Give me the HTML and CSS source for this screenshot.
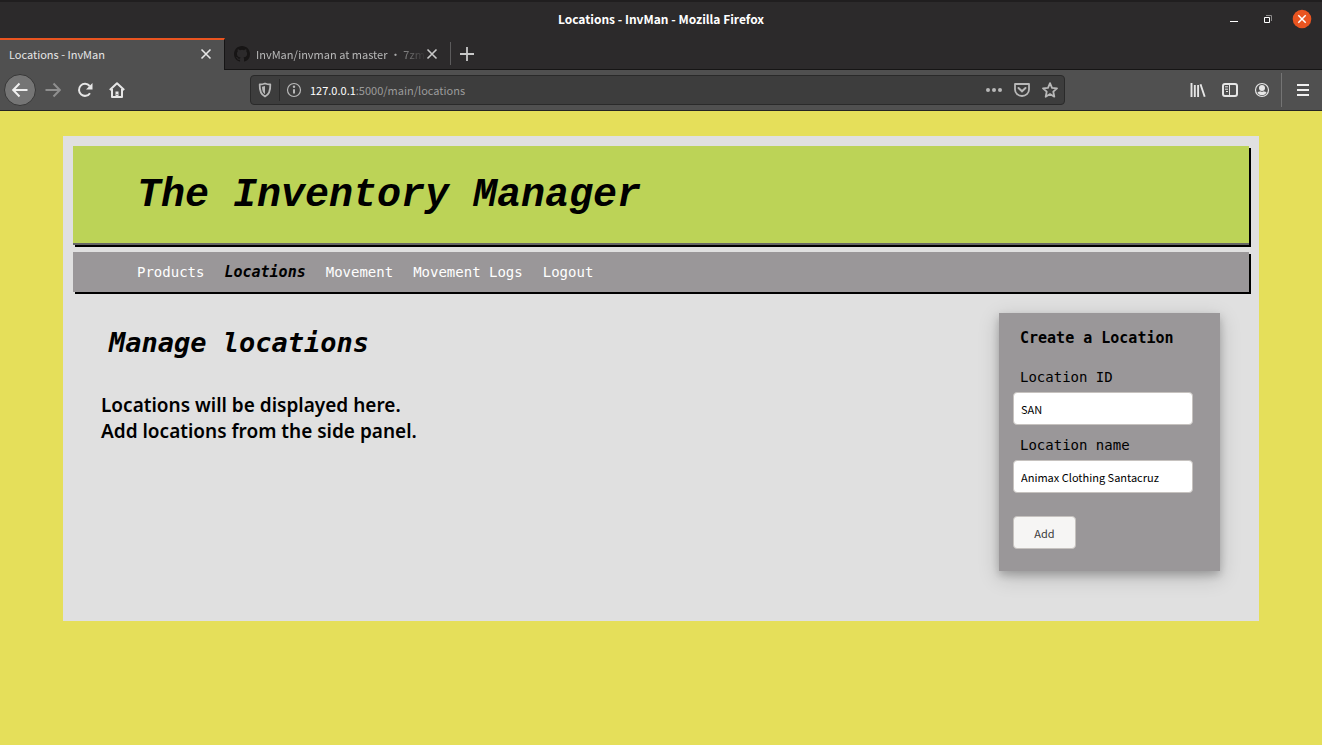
FILE: index.html
```html
<!DOCTYPE html>
<html lang="en">
<head>
<meta charset="utf-8">
<title>Locations - InvMan</title>
<link rel="stylesheet" href="styles.css">
</head>
<body>
<div class="browser">
  <div class="titlebar">
    <span class="window-title">Locations - InvMan - Mozilla Firefox</span>
    <div class="window-controls">
      <button aria-label="Minimize"><svg width="12" height="20" viewBox="0 0 12 20"><path d="M2 12.5h8" stroke="#fff"/></svg></button>
      <button aria-label="Restore"><svg width="12" height="20" viewBox="0 0 12 20"><path d="M4 6.500h5.500v5.500" fill="none" stroke="#8c8a8a"/><path d="M2.500 8.500h5v5h-5z" fill="none" stroke="#fff"/></svg></button>
      <button aria-label="Close window"><svg width="20" height="20" viewBox="0 0 20 20"><circle cx="10" cy="10" r="9.300" fill="#e95420"/><path d="M6.300 6.300l7.400 7.400M13.700 6.300l-7.400 7.400" stroke="#fff" stroke-width="1.500"/></svg></button>
    </div>
  </div>
  <div class="tabs">
    <div class="tab tab-active"><span class="tab-label">Locations - InvMan</span>
      <button aria-label="Close tab"><svg width="12" height="12" viewBox="0 0 12 12"><path d="M1.500 1.500l9 9M10.500 1.500l-9 9" stroke="#e6e6e6" stroke-width="1.600"/></svg></button></div>
    <div class="tab">
      <svg class="github" width="16" height="16" viewBox="0 0 16 16"><path fill="#171515" d="M8 0C3.580 0 0 3.580 0 8c0 3.540 2.290 6.530 5.470 7.590.4.070.55-.17.55-.38v-1.490c-2.010.37-2.530-.49-2.690-.94-.09-.23-.48-.94-.82-1.130-.28-.15-.68-.52-.01-.53.63-.01 1.080.58 1.230.82.72 1.210 1.870.87 2.330.66.07-.52.28-.87.51-1.070-1.780-.2-3.640-.89-3.640-3.950 0-.87.31-1.590.82-2.150-.08-.2-.36-1.020.08-2.120 0 0 .67-.21 2.200.82a7.600 7.600 0 0 1 4 0c1.530-1.040 2.200-.82 2.200-.82.44 1.100.16 1.920.08 2.120.51.560.82 1.270.82 2.150 0 3.070-1.870 3.750-3.650 3.950.29.250.54.730.54 1.480v2.200c0 .21.150.46.550.38A8 8 0 0 0 16 8c0-4.420-3.580-8-8-8z"/></svg>
      <span class="tab-label tab-fade">InvMan/invman at master · 7zm</span>
      <button aria-label="Close tab"><svg width="12" height="12" viewBox="0 0 12 12"><path d="M1.500 1.500l9 9M10.500 1.500l-9 9" stroke="#c8c8c8" stroke-width="1.600"/></svg></button></div>
    <button class="new-tab" aria-label="New tab"><svg width="16" height="16" viewBox="0 0 16 16"><path d="M8 1v14M1 8h14" stroke="#c8c8c8" stroke-width="1.800"/></svg></button>
  </div>
  <div class="toolbar">
    <div class="nav-buttons">
      <button class="back" aria-label="Back"><svg width="16" height="16" viewBox="0 0 16 16"><path d="M15.500 8H1.500M7.500 1.500L1.200 8l6.300 6.500" fill="none" stroke="#f0f0f0" stroke-width="2"/></svg></button>
      <button aria-label="Forward"><svg width="16" height="16" viewBox="0 0 16 16"><path d="M.5 8h14M8.500 1.500L14.800 8l-6.300 6.500" fill="none" stroke="#8f8f8f" stroke-width="2"/></svg></button>
      <button aria-label="Reload"><svg width="16" height="16" viewBox="0 0 16 16"><path d="M13 11.200A6 6 0 1 1 12.600 4" fill="none" stroke="#e6e6e6" stroke-width="2"/><path d="M15.500 1v6.500H9z" fill="#e6e6e6"/></svg></button>
      <button aria-label="Home"><svg width="16" height="16" viewBox="0 0 16 16"><path d="M.8 8L8 1.300 15.200 8M3 7v8h10V7" fill="none" stroke="#e6e6e6" stroke-width="2" stroke-linejoin="round"/><path d="M6.500 15V9.500h3V15z" fill="#e6e6e6"/><path d="M7.500 12h1v1h-1z" fill="#505050"/></svg></button>
    </div>
    <div class="address">
      <svg width="16" height="16" viewBox="0 0 16 16"><path d="M8 1.500c2 .8 3.700 1 5.300 1 .2 6-1 10-5.300 12C3.700 12.500 2.500 8.500 2.700 2.500c1.600 0 3.300-.2 5.300-1z" fill="none" stroke="#b8b8b8" stroke-width="1.800" stroke-linejoin="round"/><path d="M8 4v8.200c-2-1.400-3-3.600-3-7.500z" fill="#b8b8b8"/></svg>
      <span class="address-split"></span>
      <svg width="16" height="16" viewBox="0 0 16 16"><circle cx="8" cy="8" r="6.500" fill="none" stroke="#b8b8b8" stroke-width="1.200"/><path d="M8 7.200v4.300" stroke="#b8b8b8" stroke-width="2"/><circle cx="8" cy="4.700" r="1.200" fill="#b8b8b8"/></svg>
      <span class="url"><b>127.0.0.1</b>:5000/main/locations</span>
      <div class="address-icons">
        <svg width="16" height="16" viewBox="0 0 16 16"><g fill="#b8b8b8"><circle cx="2" cy="8" r="2"/><circle cx="8" cy="8" r="2"/><circle cx="14" cy="8" r="2"/></g></svg>
        <svg width="16" height="16" viewBox="0 0 16 16"><path d="M1 2h14v5.500a7 6.500 0 0 1-14 0z" fill="none" stroke="#b8b8b8" stroke-width="1.800" stroke-linejoin="round"/><path d="M4.500 6L8 9.300 11.500 6" fill="none" stroke="#b8b8b8" stroke-width="2" stroke-linecap="round"/></svg>
        <svg width="16" height="16" viewBox="0 0 16 16"><path d="M8 1.200l2 4.600 5 .5-3.700 3.400 1 5L8 12.100l-4.300 2.600 1-5L1 6.300l5-.5z" fill="none" stroke="#b8b8b8" stroke-width="1.800" stroke-linejoin="round"/></svg>
      </div>
    </div>
    <div class="tool-icons">
      <button aria-label="Library"><svg width="16" height="16" viewBox="0 0 16 16"><path d="M1.500 1v14M4.800 3v12M8.100 3v12M10.500 2.300l4.200 12.400" stroke="#e6e6e6" stroke-width="1.900"/></svg></button>
      <button aria-label="Sidebars"><svg width="16" height="16" viewBox="0 0 16 16"><rect x="1" y="2" width="14" height="12" rx="2" fill="none" stroke="#e6e6e6" stroke-width="2"/><path d="M7.500 2v12" stroke="#e6e6e6"/><path d="M3 4.800h3M3 7.200h3M4 9.500h2" stroke="#e6e6e6"/></svg></button>
      <button aria-label="Account"><svg width="16" height="16" viewBox="0 0 16 16"><circle cx="8" cy="8" r="6.500" fill="none" stroke="#e6e6e6" stroke-width="1.200"/><circle cx="8" cy="6" r="3" fill="#e6e6e6"/><path d="M3.500 10c1 0 2-.3 2.700-.8q1.800 1 3.600 0c.7.500 1.700.8 2.700.8-1 4.400-8 4.400-9 0z" fill="#e6e6e6"/></svg></button>
    </div>
    <button class="menu" aria-label="Menu"><svg width="16" height="16" viewBox="0 0 16 16"><path d="M2 3h12M2 8h12M2 13h12" stroke="#f0f0f0" stroke-width="2"/></svg></button>
  </div>
</div>
<div class="page">
  <header class="banner"><h1>The Inventory Manager</h1></header>
  <nav class="site-nav">
    <a href="#">Products</a>
    <a href="#" class="current" aria-current="page">Locations</a>
    <a href="#">Movement</a>
    <a href="#">Movement Logs</a>
    <a href="#">Logout</a>
  </nav>
  <main class="content">
    <section>
      <h2>Manage locations</h2>
      <p class="empty">Locations will be displayed here.<br>Add locations from the side panel.</p>
    </section>
    <form class="card">
      <h3>Create a Location</h3>
      <label for="loc-id">Location ID</label>
      <input id="loc-id" type="text" value="SAN">
      <label for="loc-name">Location name</label>
      <input id="loc-name" type="text" value="Animax Clothing Santacruz">
      <button type="button">Add</button>
    </form>
  </main>
</div>
</body>
</html>
```

FILE: styles.css
```css
* { box-sizing: border-box; }
body {
  margin: 0;
  background: #e5df5a;
  font-family: "Noto Sans CJK SC", "Noto Sans", sans-serif;
  font-size: 11px;
}
button { border: 0; padding: 0; background: none; font: inherit; }
svg { display: block; flex: none; }

.browser { color: #e6e6e6; background: #2c2a2b; }
.titlebar {
  display: grid;
  grid-template-columns: 1fr auto 1fr;
  align-items: center;
  height: 38px;
  padding-bottom: 2px;
  border-top: 2px solid #201e1f;
}
.window-title { grid-column: 2; font-size: 12px; line-height: 16px; font-weight: 700; color: #fff; }
.window-controls { display: flex; gap: 18px; justify-content: flex-end; padding-right: 10px; }
.window-controls button:first-child { margin-right: 4px; }

.tabs { display: flex; height: 32px; border-bottom: 1px solid #161515; }
.tab {
  display: flex;
  align-items: center;
  width: 225px;
  padding: 0 12px 0 9px;
  color: #b8b8b8;
}
.tab-active {
  height: 32px;
  padding-bottom: 2px;
  border-top: 2px solid #e95420;
  border-right: 1px solid #161515;
  background: #505050;
  color: #e6e6e6;
}
.tab-label { flex: 1; white-space: nowrap; }
.tab-fade { margin: 0 0 0 6px; mask-image: linear-gradient(to right, #000 80%, transparent); }
.new-tab { margin: 4px 0; padding: 0 8px; border-left: 1px solid #5c5b5c; }

.toolbar {
  display: flex;
  align-items: center;
  height: 41px;
  background: #505050;
  border-bottom: 1px solid #242424;
}
.nav-buttons { display: flex; align-items: center; gap: 16px; width: 250px; padding-left: 4px; }
.back {
  display: grid;
  place-items: center;
  width: 32px;
  height: 32px;
  margin-right: -7px;
  border: 1px solid #383838;
  border-radius: 50%;
  background: #757575;
}
.address {
  display: flex;
  align-items: center;
  flex: 1;
  height: 30px;
  padding: 0 6px;
  border: 1px solid #2a2a2a;
  border-radius: 4px;
  background: #3d3d3d;
}
.address-split { align-self: stretch; margin: 3px 6px; border-left: 1px solid #2a2a2a; }
.url { margin-left: 8px; color: #9b9b9b; }
.url b { font-weight: 400; color: #fff; }
.address-icons { display: flex; gap: 12px; margin-left: auto; }
.tool-icons { display: flex; gap: 16px; margin-left: 125px; padding-right: 11px; }
.menu { height: 34px; padding: 0 11px 0 13px; border-left: 1px solid #747474; }

.page {
  min-height: 485px;
  margin: 25px 63px;
  padding: 10px;
  background: #e0e0e0;
}
.site-nav, .card, h2 { font-family: "DejaVu Sans Mono", monospace; }
.banner {
  margin-bottom: 7px;
  padding: 28px 64px 25px;
  border-bottom: 2px solid #666;
  background: #bcd357;
  box-shadow: 2px 2px #000;
}
h1 { margin: 0; font: italic 700 40px/44px "Liberation Mono", monospace; }
.site-nav {
  display: flex;
  gap: 20px;
  padding: 10px 64px;
  background: #9a9799;
  box-shadow: 2px 2px #000;
  font-size: 14px;
  line-height: 20px;
}
.site-nav a { color: #fff; text-decoration: none; }
.site-nav .current { color: #000; font-style: italic; font-weight: 700; font-size: 15px; }
.content { display: flex; justify-content: space-between; padding: 21px 29px 40px 28px; }
h2 { margin: 12px 0 31px 8px; font-size: 27px; line-height: 36px; font-style: italic; }
.empty { margin: 0; font: 600 19px/26px "Noto Sans", sans-serif; }
.card {
  width: 221px;
  padding: 15px 27px 22px 14px;
  background: #9a9799;
  box-shadow: 0 4px 8px rgba(0, 0, 0, .2), 0 6px 20px rgba(0, 0, 0, .19);
  font-size: 14px;
}
h3 { margin: 0 0 19px 7px; font-size: 15px; line-height: 20px; white-space: nowrap; }
.card label { display: block; margin-left: 7px; line-height: 20px; }
.card input, .card button {
  height: 33px;
  border: 1px solid #c6c2bf;
  border-radius: 4px;
  font: 11px "Noto Sans CJK SC", "Noto Sans", sans-serif;
}
.card input { display: block; width: 100%; margin: 5px 0 10px; padding: 0 7px; background: #fff; color: #000; }
.card button { width: 63px; margin-top: 13px; background: #f6f5f4; color: #3a3a3a; }
```
